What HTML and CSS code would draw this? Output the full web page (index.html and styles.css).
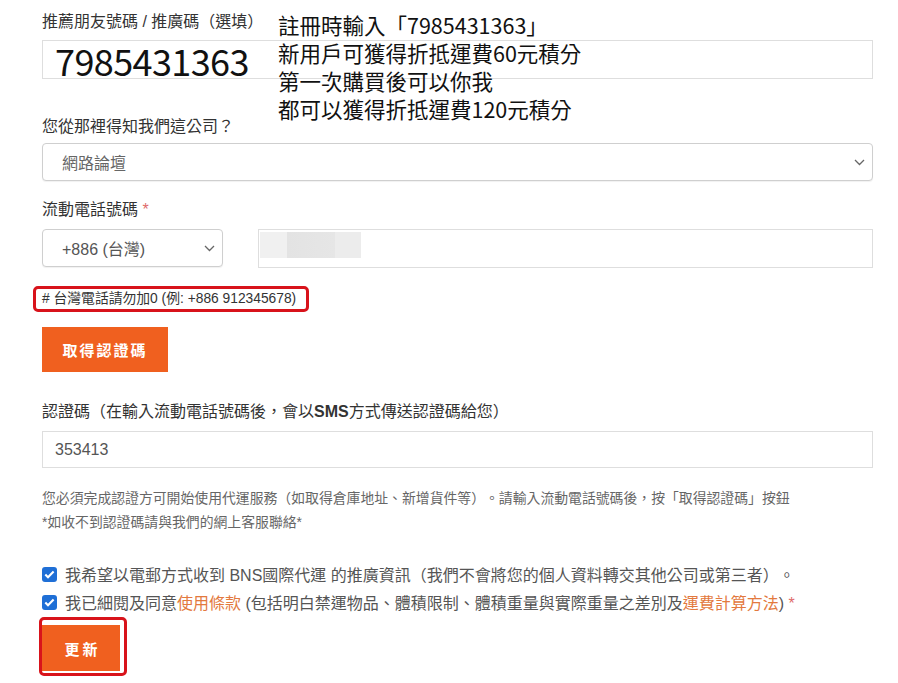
FILE: index.html
```html
<!DOCTYPE html>
<html lang="zh-Hant-TW">
<head>
<meta charset="utf-8">
<title>註冊</title>
<link rel="stylesheet" href="styles.css">
</head>
<body>
<div class="form">
  <div class="note">
    <div>註冊時輸入「7985431363」</div>
    <div>新用戶可獲得折抵運費60元積分</div>
    <div>第一次購買後可以你我</div>
    <div>都可以獲得折抵運費120元積分</div>
  </div>

  <div class="group g1">
    <div class="label">推薦朋友號碼 / 推廣碼（選填）</div>
    <div class="field input big-field"><span class="big">7985431363</span></div>
  </div>

  <div class="group g2">
    <div class="label">您從那裡得知我們這公司？</div>
    <div class="field select">
      <span>網路論壇</span>
      <svg class="chev" width="11" height="7" viewBox="0 0 11 7"><path d="M1 1l4.5 4.5L10 1" fill="none" stroke="#666" stroke-width="1.3"/></svg>
    </div>
  </div>

  <div class="group g3">
    <div class="label">流動電話號碼 <span class="req">*</span></div>
    <div class="phone-row">
      <div class="field select country">
        <span>+886 (台灣)</span>
        <svg class="chev" width="11" height="7" viewBox="0 0 11 7"><path d="M1 1l4.5 4.5L10 1" fill="none" stroke="#666" stroke-width="1.3"/></svg>
      </div>
      <div class="field input phone"><span class="blur"></span></div>
    </div>
  </div>

  <div class="hint">#&nbsp;台灣電話請勿加0 (例: +886 912345678)</div>

  <div><button class="btn btn-code">取得認證碼</button></div>

  <div class="group g4">
    <div class="label">認證碼（在輸入流動電話號碼後，會以<b>SMS</b>方式傳送認證碼給您）</div>
    <div class="field input code"><span>353413</span></div>
  </div>

  <div class="para">
    <div>您必須完成認證方可開始使用代運服務（如取得倉庫地址、新增貨件等）。請輸入流動電話號碼後，按「取得認證碼」按鈕</div>
    <div>*如收不到認證碼請與我們的網上客服聯絡*</div>
  </div>

  <div class="checks">
    <div class="check">
      <span class="cb"><svg width="15" height="15" viewBox="0 0 15 15"><path d="M3.3 7.6l2.7 2.7 5.6-5.8" fill="none" stroke="#fff" stroke-width="2.1"/></svg></span>
      <span>我希望以電郵方式收到 BNS國際代運 的推廣資訊（我們不會將您的個人資料轉交其他公司或第三者）。</span>
    </div>
    <div class="check">
      <span class="cb"><svg width="15" height="15" viewBox="0 0 15 15"><path d="M3.3 7.6l2.7 2.7 5.6-5.8" fill="none" stroke="#fff" stroke-width="2.1"/></svg></span>
      <span>我已細閱及同意<a class="link">使用條款</a> (包括明白禁運物品、體積限制、體積重量與實際重量之差別及<a class="link">運費計算方法</a>) <span class="req">*</span></span>
    </div>
  </div>

  <div class="update-wrap"><button class="btn btn-update">更新</button></div>
</div>
</body>
</html>
```

FILE: styles.css
```css
html, body {
  margin: 0;
  padding: 0;
  background: #fff;
}
body {
  font-family: "Liberation Sans", "Noto Sans CJK TC", sans-serif;
  color: #333;
  font-size: 16px;
  text-spacing-trim: space-all;
}
.form {
  position: relative;
  width: 831px;
  padding: 12px 0 0 42px;
}
.note {
  position: absolute;
  left: 278px;
  top: 11px;
  font-family: "Noto Sans CJK TC", sans-serif;
  font-size: 21.5px;
  line-height: 28px;
  color: #111;
  z-index: 2;
}
.label {
  height: 20px;
  line-height: 20px;
  font-size: 16px;
  color: #333;
  white-space: nowrap;
}
.label b {
  font-weight: 700;
}
.req {
  color: #e06a6a;
}
.g1 .label { margin-bottom: 8px; }
.g2 { margin-top: 38px; }
.g2 .label { margin-bottom: 6px; }
.g3 { margin-top: 19px; }
.g3 .label { margin-bottom: 9px; }
.g4 { margin-top: 30px; }
.g4 .label { margin-bottom: 9px; }

.field {
  box-sizing: border-box;
  display: flex;
  align-items: center;
  background: #fff;
  color: #555;
  font-size: 16px;
}
.input {
  border: 1px solid #dedede;
}
.big-field {
  height: 39px;
  padding-left: 12px;
}
.big {
  font-family: "Noto Sans CJK TC", sans-serif;
  font-size: 36px;
  line-height: 36px;
  letter-spacing: -0.6px;
  color: #111;
}
.select {
  height: 38px;
  border: 1px solid #cfcfcf;
  border-radius: 4px;
  justify-content: space-between;
  padding: 0 7px 0 19px;
  box-shadow: 0 1px 1px rgba(0,0,0,0.06);
  color: #666;
}
.chev {
  display: block;
}
.phone-row {
  display: flex;
  gap: 35px;
}
.country {
  width: 181px;
  flex: none;
  color: #555;
}
.phone {
  flex: 1;
  height: 39px;
  align-items: flex-start;
  padding: 2px 0 0 1px;
}
.blur {
  display: block;
  width: 101px;
  height: 26px;
  background: linear-gradient(90deg, #f0f0f0 0, #f0f0f0 27px, #e3e3e3 27px, #e6e6e6 75px, #ececec 75px, #ececec 101px);
}
.hint {
  display: inline-block;
  margin: 18px 0 0 -9px;
  padding: 0 10px 0 6px;
  border: 3px solid #d8131b;
  border-radius: 5px;
  line-height: 20px;
  font-size: 13.8px;
  color: #333;
  white-space: nowrap;
}
.btn {
  display: block;
  border: 0;
  margin: 0;
  background: #f0601f;
  color: #fff;
  font-family: "Noto Sans CJK TC", sans-serif;
  font-weight: 700;
  font-size: 15px;
  letter-spacing: 2px;
  cursor: pointer;
}
.btn-code {
  margin-top: 15px;
  height: 45px;
  width: 126px;
  padding: 0;
}
.code {
  height: 37px;
  padding-left: 12px;
}
.para {
  margin-top: 18px;
  font-size: 13.85px;
  line-height: 24px;
  color: #666;
  white-space: nowrap;
}
.checks {
  margin-top: 26px;
}
.check {
  display: flex;
  align-items: center;
  gap: 8px;
  height: 28px;
  font-size: 16px;
  color: #555;
  white-space: nowrap;
}
.cb {
  display: block;
  width: 15px;
  height: 15px;
  border-radius: 3px;
  background: #1f6fd6;
  flex: none;
}
.cb svg {
  display: block;
}
.link {
  color: #e3793e;
  text-decoration: none;
}
.update-wrap {
  display: inline-block;
  margin: 1px 0 0 -3px;
  padding: 5px 4px 2px 0;
  border: 3px solid #d8131b;
  border-radius: 5px;
}
.btn-update {
  width: 78px;
  height: 46px;
  padding: 0;
  letter-spacing: 3px;
  text-indent: 3px;
}
```
